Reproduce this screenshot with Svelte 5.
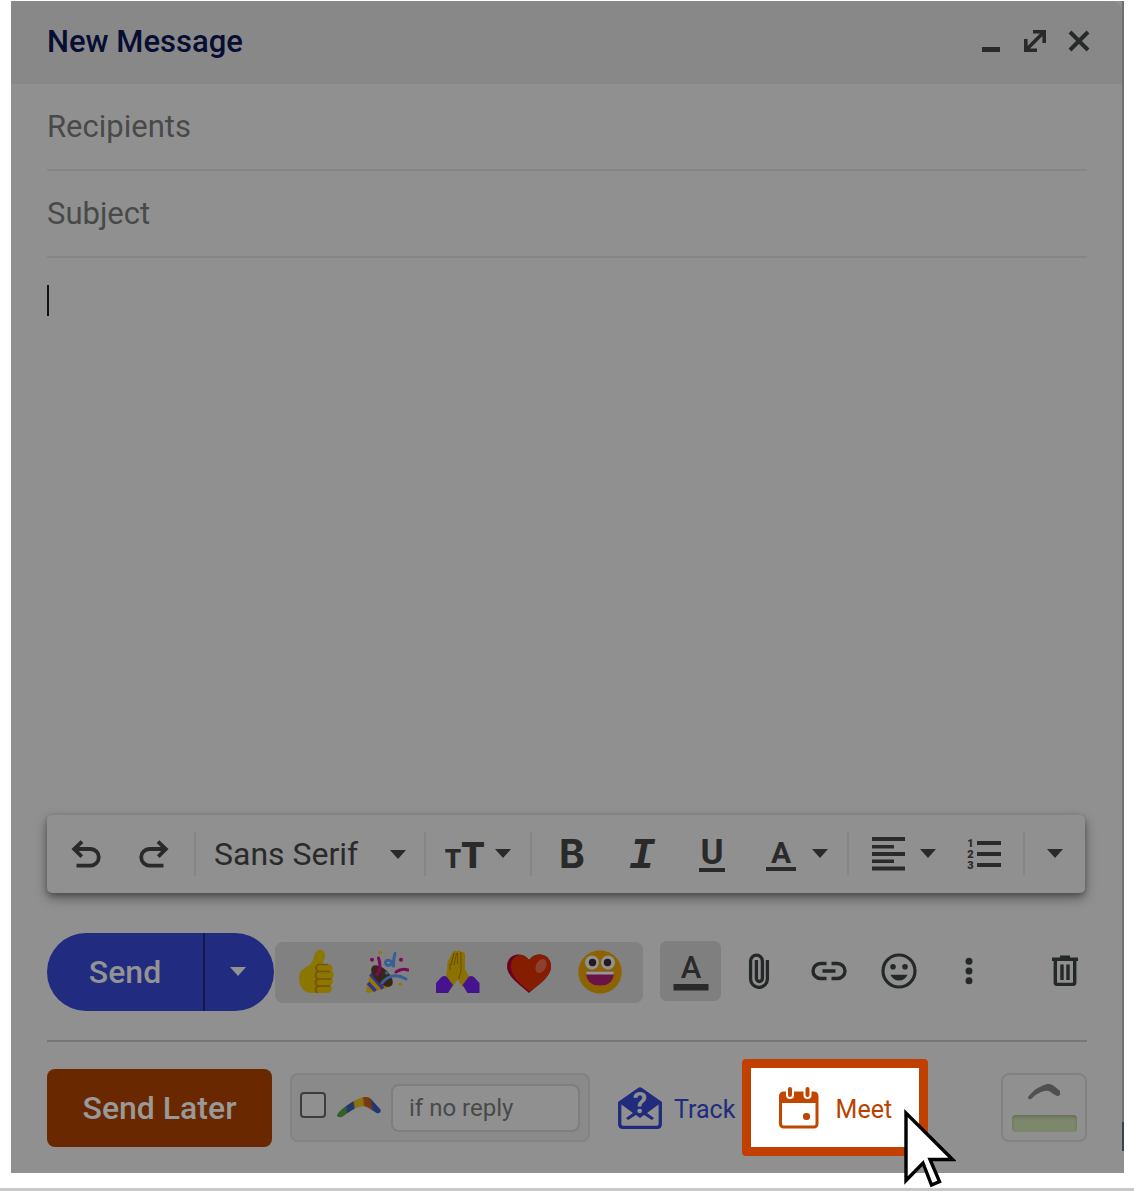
<script>
    let recipients = $state('');
    let subject = $state('');
    let message = $state('');
    let font = $state('Sans Serif');
    let remind = $state(false);
    let remindWhen = $state('');

    const fonts = ['Sans Serif', 'Serif', 'Fixed Width'];
</script>

{#snippet caret()}
    <svg class="caret" width="16" height="10" viewBox="0 0 16 10" aria-hidden="true"><path d="M0 0h16L8 9z" /></svg>
{/snippet}

<div class="page">
    <div class="compose">
        <header>
            <h1>New Message</h1>
            <button aria-label="Minimize">
                <svg width="24" height="24" viewBox="0 0 24 24"><path d="M3 18h18v5H3z" fill="#272a29" /></svg>
            </button>
            <button aria-label="Full screen">
                <svg width="24" height="24" viewBox="0 0 24 24" fill="none" stroke="#272a29" stroke-width="3.6">
                    <path d="M10 2.8h11.2V14M2.8 10v11.2H14M21 3 3 21" />
                </svg>
            </button>
            <button aria-label="Close">
                <svg width="24" height="24" viewBox="0 0 24 24" fill="none" stroke="#272a29" stroke-width="4">
                    <path d="M3 3l18 18M21 3 3 21" />
                </svg>
            </button>
        </header>

        <form onsubmit={(e) => e.preventDefault()}>
            <input class="line" type="text" bind:value={recipients} placeholder="Recipients" aria-label="Recipients" />
            <input class="line" type="text" bind:value={subject} placeholder="Subject" aria-label="Subject" />
            <div class="body">
                <textarea bind:value={message} aria-label="Message body"></textarea>
                {#if message === ''}<span class="cursor-bar"></span>{/if}
            </div>

            <div class="toolbar">
                <button class="tool history" aria-label="Undo">
                    <svg width="30" height="28" viewBox="0 0 30 28" fill="none" stroke="#2a2a2a" stroke-width="3.8">
                        <path d="M3 9h16.5a8 8 0 0 1 0 16.6H5.5M11 1.6 3.2 9l7.6 7.6" />
                    </svg>
                </button>
                <button class="tool history" aria-label="Redo">
                    <svg width="30" height="28" viewBox="0 0 30 28" fill="none" stroke="#2a2a2a" stroke-width="3.8">
                        <path d="M27 9H10.5a8 8 0 0 0 0 16.6h14M19 1.6 26.8 9l-7.6 7.6" />
                    </svg>
                </button>
                <span class="sep"></span>
                <div class="font">
                    <select bind:value={font} aria-label="Font">
                        {#each fonts as name}
                            <option>{name}</option>
                        {/each}
                    </select>
                    {@render caret()}
                </div>
                <span class="sep"></span>
                <button class="tool size" aria-label="Size">
                    <svg width="40" height="50" viewBox="0 -9 40 50">
                        <text x="8" y="30" text-anchor="middle" font-size="26" font-weight="900">T</text>
                        <text x="28" y="30" text-anchor="middle" font-size="37" font-weight="900">T</text>
                    </svg>
                    {@render caret()}
                </button>
                <span class="sep"></span>
                <button class="tool style" aria-label="Bold">
                    <svg width="34" height="56" viewBox="0 -10 34 56"><text class="bold" x="17" y="32" text-anchor="middle">B</text></svg>
                </button>
                <button class="tool style" aria-label="Italic">
                    <svg width="34" height="56" viewBox="0 -10 34 56"><text class="slab" x="17" y="32" text-anchor="middle">I</text></svg>
                </button>
                <button class="tool style" aria-label="Underline">
                    <svg width="34" height="56" viewBox="0 -10 34 56">
                        <text x="17" y="28" text-anchor="middle" font-size="35" font-weight="700">U</text>
                        <path d="M4 32h26v4H4z" />
                    </svg>
                </button>
                <button class="tool color" aria-label="Text color">
                    <svg width="30" height="56" viewBox="0 -10 30 56">
                        <text x="15" y="27" text-anchor="middle" font-size="30" font-weight="700">A</text>
                        <path d="M0 31h30v4H0z" />
                    </svg>
                    {@render caret()}
                </button>
                <span class="sep"></span>
                <button class="tool align" aria-label="Align">
                    <svg width="33" height="34" viewBox="0 0 33 34">
                        <path d="M0 0h33v4H0zM0 8h22v3.5H0zM0 15h33v4H0zM0 22.5h22v3.5H0zM0 29.5h33v4H0z" />
                    </svg>
                    {@render caret()}
                </button>
                <button class="tool list" aria-label="Numbered list">
                    <svg width="34" height="38" viewBox="0 -2 34 38">
                        <path d="M10 4h24v4H10zM10 15h24v4H10zM10 26h24v4H10z" />
                        <g font-size="11" font-weight="900" text-anchor="middle">
                            <text x="3.5" y="10">1</text>
                            <text x="3.5" y="21">2</text>
                            <text x="3.5" y="32">3</text>
                        </g>
                    </svg>
                </button>
                <span class="sep"></span>
                <button class="tool more" aria-label="More formatting options">{@render caret()}</button>
            </div>

            <div class="actions">
                <div class="send">
                    <button class="send-main">Send</button>
                    <button class="send-more" aria-label="More send options">{@render caret()}</button>
                </div>
                <div class="reactions">
                    <button aria-label="Thumbs up">
                        <svg width="44" height="44" viewBox="0 0 44 44">
                            <path d="M26 0c-3 0-4.500 2-5.500 5-1 4-2 7-4.500 9.500C11 18 5 20 5 28c0 9 5 15 14 15h14c5 0 6-5 3.500-7.500 3-2 3-5 1.500-7 2.500-2 2-6 0-7.500 2-4-1-7-4-7h-5.500c1-3 2.500-6 2.500-9 0-3-2-5-5-5z" fill="#8b7600" />
                            <path d="M34 14.500h-9c-4 1-4 6 0 7H36M24.500 21.500c-4 1-4 6.500 0 7.500H37M24.500 29c-4 1-4 6 0 7.200H36M24.500 36.200c-4 1-3.500 5.500-1 6.500" fill="none" stroke="#7a5208" stroke-width="1.700" />
                        </svg>
                    </button>
                    <button aria-label="Party popper">
                        <svg width="44" height="44" viewBox="0 0 44 44" fill="none" stroke-linecap="round">
                            <path d="M7 17 1 40.500q0 2.500 2.500 2.500L25 37z" fill="#8f7900" />
                            <path d="M5.500 24 18 38.500M3 33l7.500 8" stroke="#343391" stroke-width="3.600" stroke-linecap="butt" />
                            <ellipse cx="17" cy="26" rx="13.500" ry="7" transform="rotate(45 17 26)" fill="#39241a" />
                            <path d="M11.500 25c5-5 4-11 2-17M31 22c4-3 8-3.500 12-2" stroke="#7d0759" stroke-width="3" />
                            <path d="M17 33c7-9 15-9 24-4M30 3.500c-1 4-2 8-1.500 12.500M29 10c-2 6-8 7-8.500 3s7-4 8 3" stroke="#365f98" stroke-width="3" />
                            <circle cx="15.300" cy="2.700" r="1.600" fill="#8f7900" /><circle cx="35.300" cy="34.300" r="1.700" fill="#8f7900" />
                            <circle cx="7" cy="9.700" r="2" fill="#7d0759" /><circle cx="36" cy="9.700" r="2" fill="#7d0759" />
                            <circle cx="21.700" cy="23" r="1.800" fill="#365f98" />
                        </svg>
                    </button>
                    <button aria-label="Folded hands">
                        <svg width="44" height="44" viewBox="0 0 44 44">
                            <path d="M9 28c3-5 2-11 2.500-16C13 10 15 4 17 2c1-1.500 3-1.500 4-.5 2-2 4-1 4 1 2-1 4 0 4 2v15l5.500 9-8 8.500-5-7.500-5 7.500z" fill="#8b7200" />
                            <path d="M25 2v19l-2.500 8M15 15l3-12M18 15l2.500-12M21.500 14V3M14 14v6" fill="none" stroke="#704f04" stroke-width="1.100" />
                            <path d="M0 33l5.500-6q3-2 5.500 0l6 8-5 8H0zM43.500 33 38 27q-3-2-5.500 0l-6 8 5 8h12z" fill="#45138d" />
                        </svg>
                    </button>
                    <button aria-label="Heart">
                        <svg width="44" height="44" viewBox="0 0 44 44">
                            <path d="M22 43C12 34 0 27 0 16 0 5 14 0 22 10 30 0 44 5 44 16c0 11-12 18-22 27z" fill="#6e001f" />
                            <path d="M23 42C13 33 4 27 4 16 4 5 16 1 22 10c8-10 22-5 22 6 0 11-12 18-21 26z" fill="#851e00" />
                            <ellipse cx="34" cy="16" rx="5" ry="7.500" transform="rotate(28 34 16)" fill="#8e4030" />
                        </svg>
                    </button>
                    <button aria-label="Grinning face">
                        <svg width="44" height="44" viewBox="0 0 44 44">
                            <circle cx="22" cy="22" r="21.700" fill="#8c6300" />
                            <circle cx="14" cy="12.500" r="7" fill="#919191" /><circle cx="30" cy="12.500" r="7" fill="#919191" />
                            <circle cx="14.500" cy="12.500" r="3.700" fill="#211b1e" /><circle cx="29.500" cy="12.500" r="3.700" fill="#211b1e" />
                            <path d="M8 21.500h28q0 14-14 14t-14-14z" fill="#6b1246" />
                            <path d="M8 21.500h28l-.5 3h-27z" fill="#969696" />
                        </svg>
                    </button>
                </div>
                <button class="format" aria-label="Formatting options">
                    <svg width="36" height="44" viewBox="0 -6 36 44">
                        <text x="18" y="23" text-anchor="middle" font-size="31" font-weight="500">A</text>
                        <path d="M.5 29h35v6.500H.5z" />
                    </svg>
                </button>
                <div class="inserts">
                    <button aria-label="Attach files">
                        <svg width="36" height="36" viewBox="-8 0 36 36" fill="none" stroke="#252828" stroke-width="3.300">
                            <path d="M18.400 7v19a8.400 8.400 0 0 1-16.800 0V8a5.900 5.900 0 0 1 11.800 0v17.500a3 3 0 0 1-6 0V7" />
                        </svg>
                    </button>
                    <button aria-label="Insert link">
                        <svg width="36" height="36" viewBox="0 0 36 36" fill="none" stroke="#252828" stroke-width="3.400">
                            <path d="M15.500 10.500H9.500a7.500 7.500 0 0 0 0 15h6M20.500 10.500h6a7.500 7.500 0 0 1 0 15h-6M11.500 18h13" />
                        </svg>
                    </button>
                    <button aria-label="Insert emoji">
                        <svg width="36" height="36" viewBox="0 0 36 36" fill="#252828">
                            <circle cx="18" cy="18" r="16" fill="none" stroke="#252828" stroke-width="3.200" />
                            <circle cx="12" cy="13.700" r="2.800" /><circle cx="24" cy="13.700" r="2.800" />
                            <path d="M9.500 21.700h17q-2.500 5.800-8.500 5.800t-8.500-5.800z" />
                        </svg>
                    </button>
                    <button aria-label="More options">
                        <svg width="36" height="36" viewBox="0 0 36 36" fill="#252828">
                            <circle cx="18" cy="8.300" r="3.500" /><circle cx="18" cy="18" r="3.500" /><circle cx="18" cy="27.700" r="3.500" />
                        </svg>
                    </button>
                </div>
                <button class="trash" aria-label="Discard draft">
                    <svg width="28" height="32" viewBox="0 0 28 32" fill="none" stroke="#252828" stroke-width="3.400">
                        <path d="M1 4.200h26M9 2.200h10" /><path d="M4.300 4v23.500q0 1.900 1.900 1.900h15.600q1.900 0 1.900-1.900V4M11 9.500v15.500M17 9.500v15.500" />
                    </svg>
                </button>
            </div>

            <div class="extras">
                <button class="later">Send Later</button>
                <div class="boomerang">
                    <input type="checkbox" bind:checked={remind} aria-label="Boomerang this message" />
                    <svg width="44" height="22" viewBox="0 0 44 22" fill="none" aria-hidden="true">
                        <linearGradient id="wing" gradientUnits="userSpaceOnUse" x1="0" y1="14" x2="44" y2="8">
                            <stop offset=".2" stop-color="#345f27" /><stop offset=".24" stop-color="#23376f" />
                            <stop offset=".38" stop-color="#23376f" /><stop offset=".42" stop-color="#8b7312" />
                            <stop offset=".6" stop-color="#8b7312" /><stop offset=".64" stop-color="#793910" />
                            <stop offset=".76" stop-color="#793910" /><stop offset=".82" stop-color="#23376f" />
                        </linearGradient>
                        <path d="M0 18q1-3 9-9Q20 1 27 0q5-.5 7 2l9 10q2 3-1 4-2 1-4-1l-8-5q-4-2-11 1-6 3-14 9-5 1-5-2z" fill="url(#wing)" />
                    </svg>
                    <input type="text" bind:value={remindWhen} placeholder="if no reply" aria-label="Remind me" />
                </div>
                <button class="track">
                    <svg width="44" height="42" viewBox="0 0 44 42" aria-hidden="true">
                        <path d="M1.700 15v22q0 3.300 3.300 3.300h34q3.300 0 3.300-3.300V15" fill="none" stroke="#212b7d" stroke-width="3.300" />
                        <path d="M0 15 20 1q2-1.500 4 0l20 14-15 11 7 5-2 2-8-5-4 3-4-3-8 5-2-2 7-5z" fill="#212b7d" />
                        <text x="22" y="26" text-anchor="middle" font-size="29" font-weight="700" fill="#909090">?</text>
                    </svg>
                    <span class="label">Track</span>
                </button>
                <button class="meet">
                    <svg width="40" height="42" viewBox="0 0 40 42" aria-hidden="true">
                        <rect x="1.500" y="6" width="36.500" height="34" rx="3" fill="#fff" stroke="#c14600" stroke-width="3" />
                        <path d="M2 16V7q0-2 2-2h32q2 0 2 2v9z" fill="#c14600" />
                        <path d="M11 2v6M28.500 2v6" stroke="#fff" stroke-width="8" stroke-linecap="round" />
                        <path d="M11 2v6M28.500 2v6" stroke="#c14600" stroke-width="4" stroke-linecap="round" />
                        <rect x="24" y="26" width="7" height="7" rx="3" fill="#c14600" />
                    </svg>
                    <span class="label">Meet</span>
                    <svg class="pointer" width="54" height="82" viewBox="0 0 54 82" aria-hidden="true">
                        <path d="M4 7v67.500L21 57l8.500 22 8-3.500L28 53.500h22.500z" fill="#fff" stroke="#000" stroke-width="3.400" />
                    </svg>
                </button>
                <button class="status" aria-label="Boomerang status">
                    <svg width="32" height="18" viewBox="0 0 32 18" aria-hidden="true">
                        <path d="M0 13Q2 10 8 5 15 1 19 0q4-.5 7 2l6 5v4q-2 2-5 0l-6-4q-3-1-8 1Q8 10 3 15q-3 1-3-2z" fill="#505050" />
                    </svg>
                    <span class="bar"></span>
                </button>
            </div>
        </form>
    </div>
</div>

<style>
    :global(body) {
        margin: 0;
        background: #fff;
        font-family: Roboto, "Liberation Sans", sans-serif;
    }

    .page {
        display: flex;
        flex-direction: column;
        box-sizing: border-box;
        min-height: 100vh;
        padding: 1px 10px 15px 11px;
        border-bottom: 3px solid #c8c8c8;
    }

    .compose {
        flex: 1;
        display: flex;
        flex-direction: column;
        padding-right: 2px;
        background:
            linear-gradient(to top, #909090 22px, #37424c 22px, #37424c 51px, #6e7070 51px) right / 2px 100% no-repeat,
            #909090;
    }

    button,
    input,
    select,
    textarea {
        margin: 0;
        padding: 0;
        border: none;
        border-radius: 0;
        outline: none;
        background: none;
        font: inherit;
        color: inherit;
        box-sizing: border-box;
    }

    button {
        display: flex;
        align-items: center;
        justify-content: center;
        flex-shrink: 0;
        cursor: pointer;
    }

    svg {
        flex-shrink: 0;
    }

    .caret {
        fill: #2a2a2a;
    }

    header {
        display: flex;
        align-items: center;
        gap: 20px;
        box-sizing: border-box;
        height: 83px;
        padding: 0 31px 3px 36px;
        background: #888;
        border-radius: 0 12px 0 0;
    }

    h1 {
        flex: 1;
        margin: 0;
        font-size: 31px;
        font-weight: 500;
        color: #070d33;
    }

    form {
        flex: 1;
        display: flex;
        flex-direction: column;
        padding: 0 35px 17px 36px;
    }

    .line {
        height: 87px;
        border-bottom: 2px solid #868686;
        font-size: 31px;
        color: #1f1f1f;
    }

    input::placeholder {
        color: #484a4a;
        opacity: 1;
    }

    .body {
        position: relative;
        flex: 1;
        display: flex;
        min-height: 200px;
    }

    textarea {
        flex: 1;
        padding: 24px 0;
        resize: none;
        font-size: 31px;
    }

    .cursor-bar {
        position: absolute;
        left: 0;
        top: 27px;
        width: 2px;
        height: 31px;
        background: #111;
    }

    .toolbar {
        display: flex;
        align-items: center;
        height: 78px;
        margin-right: 2px;
        padding-left: 5px;
        background: #909090;
        border-radius: 5px;
        box-shadow: 0 5px 12px rgba(0, 0, 0, 0.4), 0 2px 5px rgba(0, 0, 0, 0.2);
        color: #2a2a2a;
    }

    .toolbar svg,
    .format svg {
        fill: #2a2a2a;
    }

    .toolbar .history svg {
        fill: none;
    }

    .sep {
        width: 2px;
        height: 44px;
        background: #868686;
    }

    .tool {
        height: 60px;
    }

    .history {
        width: 68px;
    }

    .history + .sep {
        margin-left: 6px;
    }

    .font {
        position: relative;
        width: 229px;
    }

    .font select {
        width: 100%;
        height: 60px;
        padding-left: 18px;
        appearance: none;
        font-size: 32px;
    }

    .font .caret {
        position: absolute;
        top: 26px;
        right: 18px;
        pointer-events: none;
    }

    .size {
        width: 104px;
        gap: 10px;
    }

    .style {
        width: 70px;
    }

    .size + .sep {
        margin-right: 5px;
    }

    .bold {
        font-family: Inter, sans-serif;
        font-size: 39px;
        font-weight: 700;
    }

    .slab {
        font-family: "Liberation Mono", monospace;
        font-size: 44px;
        font-style: italic;
        font-weight: 700;
    }

    .color {
        width: 100px;
        gap: 16px;
    }

    .align {
        width: 110px;
        gap: 15px;
    }

    .list {
        width: 50px;
        margin-right: 14px;
    }

    .more {
        width: 60px;
    }

    .actions {
        display: flex;
        align-items: center;
        height: 78px;
        margin-top: 40px;
        padding-bottom: 29px;
        border-bottom: 2px solid #777;
    }

    .send {
        display: flex;
        height: 78px;
        border-radius: 39px;
        overflow: hidden;
        background: #212b80;
        font-size: 32px;
        font-weight: 500;
        color: #939393;
    }

    .send-main {
        width: 156px;
    }

    .send-more {
        width: 71px;
        padding-right: 4px;
        border-left: 2px solid #13184c;
    }

    .send .caret {
        fill: #939393;
    }

    .reactions {
        display: flex;
        align-items: center;
        gap: 27px;
        height: 61px;
        margin-left: 1px;
        padding: 0 21px 0 19px;
        background: #818181;
        border-radius: 8px;
    }

    .format {
        width: 61px;
        height: 60px;
        margin-left: 17px;
        background: #7f7f7f;
        border-radius: 7px;
    }

    .format,
    .inserts,
    .trash {
        margin-bottom: 2px;
    }

    .inserts {
        display: flex;
        gap: 34px;
        margin-left: 20px;
    }

    .trash {
        margin-left: auto;
        margin-right: 8px;
    }

    .extras {
        display: flex;
        align-items: center;
        height: 97px;
        margin-top: 17px;
    }

    .later {
        width: 225px;
        height: 78px;
        background: #6a2800;
        border-radius: 8px;
        font-size: 32px;
        font-weight: 500;
        color: #999;
    }

    .boomerang {
        display: flex;
        align-items: center;
        box-sizing: border-box;
        width: 300px;
        height: 69px;
        margin-left: 18px;
        padding: 0 8px;
        background: #8a8a8a;
        border: 2px solid #828282;
        border-radius: 8px;
    }

    .boomerang input[type="checkbox"] {
        appearance: none;
        width: 26px;
        height: 26px;
        margin: 0 11px 6px 0;
        border: 2px solid #3d3d3d;
        border-radius: 4px;
        background: #909090;
    }

    .boomerang input[type="checkbox"]:checked {
        background: #212b80;
    }

    .boomerang input[type="text"] {
        flex: 1;
        min-width: 0;
        height: 48px;
        margin-left: 10px;
        padding: 0 16px;
        background: #909090;
        border: 2px solid #7d7d82;
        border-radius: 8px;
        font-size: 24px;
    }

    .label {
        padding-top: 4px;
    }

    .track {
        gap: 12px;
        margin-left: 28px;
        font-size: 25px;
        color: #212b7d;
    }

    .meet {
        position: relative;
        width: 186px;
        height: 97px;
        margin-left: 7px;
        gap: 17px;
        background: #fff;
        border: 9px solid #c14000;
        border-radius: 4px;
        font-size: 25px;
        color: #b84300;
    }

    .pointer {
        position: absolute;
        left: 151px;
        top: 38px;
    }

    .status {
        flex-direction: column;
        gap: 13px;
        width: 86px;
        height: 69px;
        margin-left: auto;
        border: 2px solid #828282;
        border-radius: 8px;
    }

    .bar {
        width: 65px;
        height: 17px;
        background: #7c876c;
        border-radius: 4px;
        box-shadow: inset 0 2px 3px #667055;
    }
</style>
